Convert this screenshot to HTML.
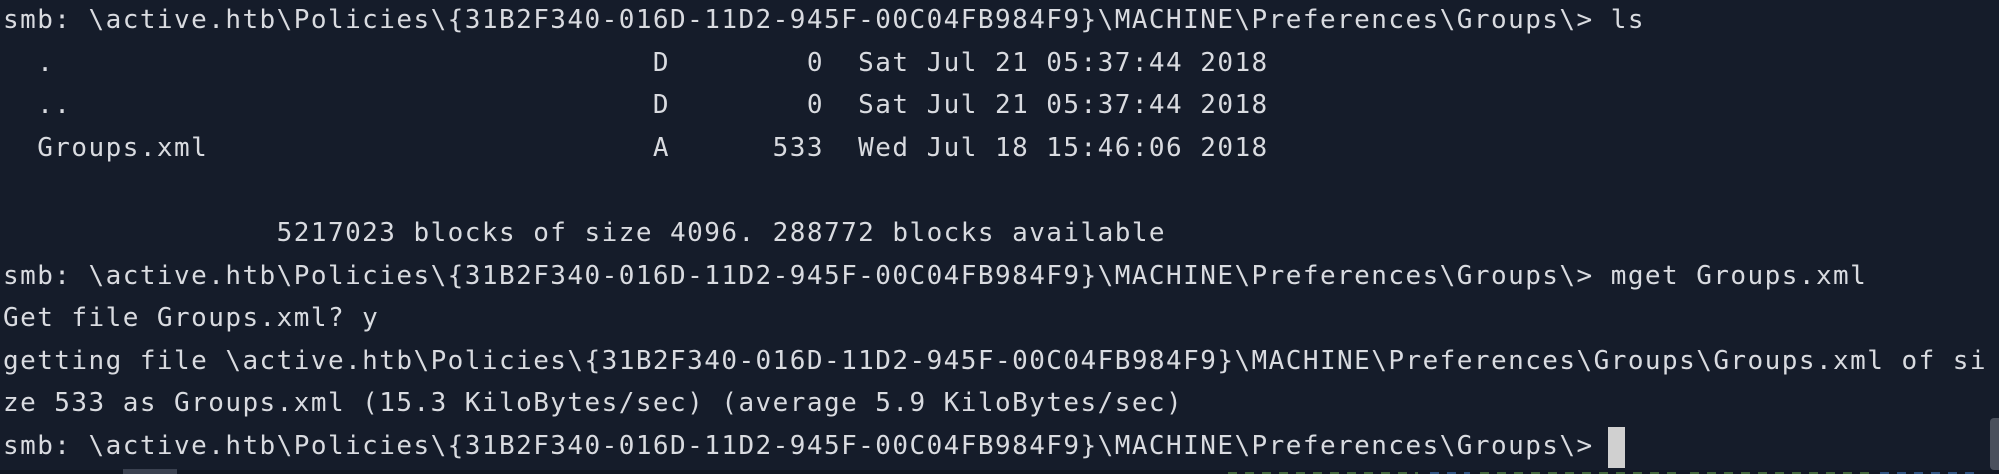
<!DOCTYPE html>
<html><head><meta charset="utf-8"><style>
html,body{margin:0;padding:0;width:1999px;height:474px;overflow:hidden;background:#151c2a;}
pre{position:absolute;left:3px;top:-1px;margin:0;font-family:"DejaVu Sans Mono","Liberation Mono",monospace;font-size:26px;letter-spacing:1.45px;line-height:42.6px;color:#d9dbe0;white-space:pre;}
.cur{position:absolute;left:1608px;top:427px;width:17px;height:41px;background:#d0d0d0;}
.strip{position:absolute;left:0;top:470px;width:1999px;height:4px;background:#111723;}
.bar{position:absolute;left:123px;top:469px;width:54px;height:5px;background:#3a4150;}
.sc{position:absolute;left:1990px;top:418px;width:9px;height:52px;background:#4a505c;border-radius:4px 0 0 4px;}
.g{position:absolute;top:472px;height:2px;opacity:.55;background-image:repeating-linear-gradient(90deg,currentColor 0 9px,transparent 9px 17px);}
</style></head><body>
<pre>smb: \active.htb\Policies\{31B2F340-016D-11D2-945F-00C04FB984F9}\MACHINE\Preferences\Groups\> ls
  .                                   D        0  Sat Jul 21 05:37:44 2018
  ..                                  D        0  Sat Jul 21 05:37:44 2018
  Groups.xml                          A      533  Wed Jul 18 15:46:06 2018

                5217023 blocks of size 4096. 288772 blocks available
smb: \active.htb\Policies\{31B2F340-016D-11D2-945F-00C04FB984F9}\MACHINE\Preferences\Groups\> mget Groups.xml
Get file Groups.xml? y
getting file \active.htb\Policies\{31B2F340-016D-11D2-945F-00C04FB984F9}\MACHINE\Preferences\Groups\Groups.xml of si
ze 533 as Groups.xml (15.3 KiloBytes/sec) (average 5.9 KiloBytes/sec)
smb: \active.htb\Policies\{31B2F340-016D-11D2-945F-00C04FB984F9}\MACHINE\Preferences\Groups\&gt; </pre>
<div class="cur"></div>
<div class="strip"></div>
<div class="bar"></div>
<div class="sc"></div>
<div class="g" style="left:1228px;width:190px;color:#6aa84f"></div>
<div class="g" style="left:1430px;width:40px;color:#4a86d0"></div>
<div class="g" style="left:1480px;width:200px;color:#6aa84f"></div>
<div class="g" style="left:1690px;width:180px;color:#6aa84f"></div>
<div class="g" style="left:1880px;width:100px;color:#4a86d0"></div>
</body></html>
